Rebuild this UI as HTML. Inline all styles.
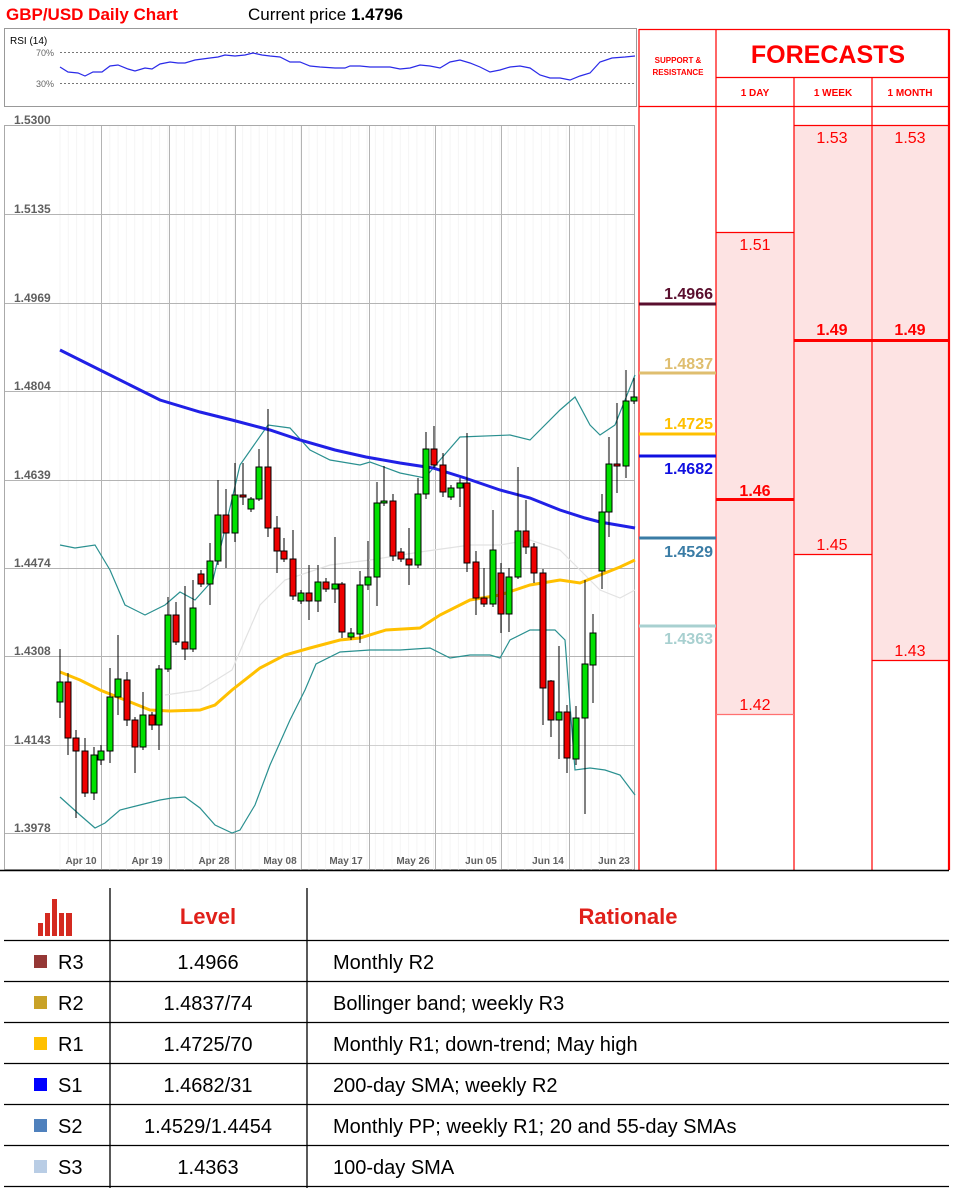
<!DOCTYPE html>
<html><head><meta charset="utf-8"><style>
html,body{margin:0;padding:0;background:#fff;width:959px;height:1188px;overflow:hidden}
svg{display:block}
text{font-family:"Liberation Sans",sans-serif}
</style></head><body>
<svg id="s" width="959" height="1188" viewBox="0 0 959 1188" xmlns="http://www.w3.org/2000/svg">
<rect width="959" height="1188" fill="#fff"/>
<text x="6" y="20" font-size="17" font-weight="bold" fill="#ff0000">GBP/USD Daily Chart</text>
<text x="248" y="20" font-size="17" fill="#000">Current price <tspan font-weight="bold">1.4796</tspan></text>
<rect x="4.5" y="28.5" width="632" height="78" fill="#fff" stroke="#999"/>
<text x="10" y="44" font-size="10" fill="#000">RSI (14)</text>
<text x="36" y="56" font-size="9" fill="#666">70%</text>
<text x="36" y="87" font-size="9" fill="#666">30%</text>
<line x1="60" y1="52.5" x2="636" y2="52.5" stroke="#777" stroke-dasharray="2,2"/>
<line x1="60" y1="83.5" x2="636" y2="83.5" stroke="#777" stroke-dasharray="2,2"/>
<polyline fill="none" stroke="#2a2ae8" stroke-width="1.2" points="60,67 68,72 78,73 85,76 93,72 102,72 110,66 118,65 128,69 135,71 145,68 152,69 160,64 170,62 178,63 185,63 195,60 210,58 218,57 225,55 235,56 245,55 253,53 262,55 270,56 280,57 290,62 300,62 310,66 320,67 335,68 345,68 350,66 360,66 370,67 380,67 390,67 400,69 410,68 420,65 430,66 440,68 450,62 460,60 470,63 480,67 490,72 500,70 510,67 520,66 530,68 540,75 550,78 560,78 570,80 580,76 590,73 600,62 612,58 625,57 635,56"/>
<rect x="4.5" y="125.5" width="630" height="744" fill="#fff" stroke="#aaa"/>
<g id="minor" stroke="#f5f5f5" stroke-width="1"></g>
<g stroke="#b4b4b4" stroke-width="1">
<line x1="5" y1="214.5" x2="634" y2="214.5"/><line x1="5" y1="303.5" x2="634" y2="303.5"/><line x1="5" y1="391.5" x2="634" y2="391.5"/><line x1="5" y1="480.5" x2="634" y2="480.5"/><line x1="5" y1="568.5" x2="634" y2="568.5"/><line x1="5" y1="656.5" x2="634" y2="656.5"/><line x1="5" y1="745.5" x2="634" y2="745.5" stroke="#d0d0d0"/><line x1="5" y1="833.5" x2="634" y2="833.5"/>
<line x1="101.5" y1="126" x2="101.5" y2="870"/><line x1="169.5" y1="126" x2="169.5" y2="870"/><line x1="235.5" y1="126" x2="235.5" y2="870"/><line x1="301.5" y1="126" x2="301.5" y2="870"/><line x1="369.5" y1="126" x2="369.5" y2="870"/><line x1="435.5" y1="126" x2="435.5" y2="870"/><line x1="501.5" y1="126" x2="501.5" y2="870"/><line x1="569.5" y1="126" x2="569.5" y2="870"/>
</g>
<g font-size="12" fill="#606060" font-weight="bold">
<text x="14" y="124">1.5300</text><text x="14" y="213">1.5135</text><text x="14" y="302">1.4969</text><text x="14" y="390">1.4804</text><text x="14" y="479">1.4639</text><text x="14" y="567">1.4474</text><text x="14" y="655">1.4308</text><text x="14" y="744">1.4143</text><text x="14" y="832">1.3978</text>
</g>
<g font-size="10" fill="#606060" font-weight="bold" text-anchor="middle">
<text x="81" y="864">Apr 10</text><text x="147" y="864">Apr 19</text><text x="214" y="864">Apr 28</text><text x="280" y="864">May 08</text><text x="346" y="864">May 17</text><text x="413" y="864">May 26</text><text x="481" y="864">Jun 05</text><text x="548" y="864">Jun 14</text><text x="614" y="864">Jun 23</text>
</g>
<polyline fill="none" stroke="#e2e2e2" stroke-width="1.2" points="165,695 200,690 232,670 260,605 285,580 330,565 370,560 420,552 470,545 500,545 530,540 560,550 580,570 600,590 620,598 635,590"/>
<polyline fill="none" stroke="#2a9090" stroke-width="1.2" points="60,545 75,548 95,545 110,570 125,605 145,615 165,605 180,592 195,600 213,580 240,465 268,425 290,428 310,450 330,460 360,465 370,462 400,473 425,478 440,460 460,437 510,435 530,440 560,410 575,397 590,425 600,435 615,425 635,375"/>
<polyline fill="none" stroke="#2a9090" stroke-width="1.2" points="60,797 80,815 95,828 105,823 120,810 140,805 160,800 172,798 185,797 200,808 215,825 232,833 240,830 255,805 270,765 290,720 305,690 316,664 340,652 370,650 400,650 430,648 450,658 470,655 490,655 500,658 510,640 530,630 555,630 565,640 575,770 590,768 605,770 620,775 635,795"/>
<polyline fill="none" stroke="#ffc000" stroke-width="3" points="60,672 80,680 100,690 125,700 150,710 170,711 200,710 215,705 232,690 260,668 285,655 310,648 340,640 360,638 386,630 420,628 440,615 470,600 500,595 530,585 560,580 580,583 600,575 620,567 635,560"/>
<polyline fill="none" stroke="#2020e6" stroke-width="3" points="60,350 80,360 100,370 130,385 160,400 200,412 232,420 270,430 300,440 335,450 366,457 400,463 433,468 465,478 500,490 530,498 560,510 585,518 600,522 635,528"/>
<g id="candles"></g>
<g>
<rect x="716" y="232" width="78" height="482" fill="#fde3e3"/>
<rect x="794" y="125" width="78" height="429" fill="#fde3e3"/>
<rect x="872" y="125" width="77" height="535" fill="#fde3e3"/>
<g stroke="#ff0000" stroke-width="1.2" fill="none">
<line x1="639" y1="29" x2="639" y2="870"/><line x1="716" y1="29" x2="716" y2="870"/><line x1="794" y1="77" x2="794" y2="870"/><line x1="872" y1="77" x2="872" y2="870"/>
<line x1="639" y1="29.5" x2="949" y2="29.5"/><line x1="716" y1="77.5" x2="949" y2="77.5"/><line x1="639" y1="106.5" x2="949" y2="106.5"/>
<line x1="794" y1="125.5" x2="949" y2="125.5"/><line x1="716" y1="232.5" x2="794" y2="232.5"/><line x1="794" y1="554.5" x2="872" y2="554.5"/><line x1="872" y1="660.5" x2="949" y2="660.5"/><line x1="716" y1="714.5" x2="794" y2="714.5" stroke="#ff7070"/>
</g>
<line x1="949" y1="29" x2="949" y2="870" stroke="#ff0000" stroke-width="2.2"/>
<line x1="716" y1="499.5" x2="794" y2="499.5" stroke="#ff0000" stroke-width="3"/>
<line x1="794" y1="340.5" x2="949" y2="340.5" stroke="#ff0000" stroke-width="3"/>
<text x="678" y="63" font-size="8" font-weight="bold" fill="#ff0000" text-anchor="middle">SUPPORT &amp;</text>
<text x="678" y="75" font-size="8" font-weight="bold" fill="#ff0000" text-anchor="middle">RESISTANCE</text>
<text x="828" y="63" font-size="25" font-weight="bold" fill="#ff0000" text-anchor="middle">FORECASTS</text>
<g font-size="10" font-weight="bold" fill="#ff0000" text-anchor="middle"><text x="755" y="96">1 DAY</text><text x="833" y="96">1 WEEK</text><text x="910" y="96">1 MONTH</text></g>
<g font-size="16" fill="#ff0000" text-anchor="middle">
<text x="832" y="143">1.53</text><text x="910" y="143">1.53</text><text x="755" y="250">1.51</text><text x="832" y="550">1.45</text><text x="910" y="656">1.43</text><text x="755" y="710">1.42</text>
<g font-weight="bold"><text x="832" y="335">1.49</text><text x="910" y="335">1.49</text><text x="755" y="496">1.46</text></g>
</g>
<g stroke-width="3">
<line x1="639" y1="304" x2="716" y2="304" stroke="#5a0f2e"/><line x1="639" y1="373" x2="716" y2="373" stroke="#dfbe6f"/><line x1="639" y1="434" x2="716" y2="434" stroke="#ffc000"/><line x1="639" y1="456" x2="716" y2="456" stroke="#1010e0"/><line x1="639" y1="538" x2="716" y2="538" stroke="#3a7ca5"/><line x1="639" y1="626" x2="716" y2="626" stroke="#a8d0d0"/>
</g>
<g font-size="16" font-weight="bold" text-anchor="end">
<text x="713" y="299" fill="#5a0f2e">1.4966</text><text x="713" y="369" fill="#dfbe6f">1.4837</text><text x="713" y="429" fill="#ffc000">1.4725</text><text x="713" y="474" fill="#1010e0">1.4682</text><text x="713" y="557" fill="#3a7ca5">1.4529</text><text x="713" y="644" fill="#a8d0d0">1.4363</text>
</g>
</g>
<line x1="0" y1="870.5" x2="949" y2="870.5" stroke="#000" stroke-width="1.5"/>
<g stroke="#000" stroke-width="1.3">
<line x1="110" y1="888" x2="110" y2="1188"/><line x1="307" y1="888" x2="307" y2="1188"/>
<line x1="4" y1="940.5" x2="949" y2="940.5"/><line x1="4" y1="981.5" x2="949" y2="981.5"/><line x1="4" y1="1022.5" x2="949" y2="1022.5"/><line x1="4" y1="1063.5" x2="949" y2="1063.5"/><line x1="4" y1="1104.5" x2="949" y2="1104.5"/><line x1="4" y1="1145.5" x2="949" y2="1145.5"/><line x1="4" y1="1186.5" x2="949" y2="1186.5"/>
</g>
<g fill="#d42a20"><rect x="38" y="923" width="5" height="13"/><rect x="45" y="913" width="5" height="23"/><rect x="52" y="899" width="5" height="37"/><rect x="59" y="913" width="5" height="23"/><rect x="66" y="913" width="6" height="23"/></g>
<g font-size="22" font-weight="bold" fill="#e0201a" text-anchor="middle"><text x="208" y="924">Level</text><text x="628" y="924">Rationale</text></g>
<g><rect x="34" y="955" width="13" height="13" fill="#953735"/><rect x="34" y="996" width="13" height="13" fill="#c9a227"/><rect x="34" y="1037" width="13" height="13" fill="#ffc000"/><rect x="34" y="1078" width="13" height="13" fill="#0000ff"/><rect x="34" y="1119" width="13" height="13" fill="#4f81bd"/><rect x="34" y="1160" width="13" height="13" fill="#b9cde5"/></g>
<g font-size="20" fill="#000">
<text x="58" y="969">R3</text><text x="58" y="1010">R2</text><text x="58" y="1051">R1</text><text x="58" y="1092">S1</text><text x="58" y="1133">S2</text><text x="58" y="1174">S3</text>
<g text-anchor="middle"><text x="208" y="969">1.4966</text><text x="208" y="1010">1.4837/74</text><text x="208" y="1051">1.4725/70</text><text x="208" y="1092">1.4682/31</text><text x="208" y="1133">1.4529/1.4454</text><text x="208" y="1174">1.4363</text></g>
<text x="333" y="969">Monthly R2</text><text x="333" y="1010">Bollinger band; weekly R3</text><text x="333" y="1051">Monthly R1; down-trend; May high</text><text x="333" y="1092">200-day SMA; weekly R2</text><text x="333" y="1133">Monthly PP; weekly R1; 20 and 55-day SMAs</text><text x="333" y="1174">100-day SMA</text>
</g>
</svg>
<script>
var C=[[60,682,702,'g',649,718],[68,682,738,'r',673,755],[76,738,751,'r',730,818],[85,751,793,'r',738,797],[94,755,793,'g',747,800],[101,751,760,'g',745,765],[110,697,751,'g',668,763],[118,679,697,'g',635,715],[127,680,720,'r',672,726],[135,720,747,'r',717,773],[143,715,747,'g',692,750],[152,715,725,'r',712,730],[159,669,725,'g',665,750],[168,615,669,'g',597,672],[176,615,642,'r',602,645],[185,642,649,'r',586,660],[193,608,649,'g',580,652],[201,574,584,'r',570,587],[210,561,584,'g',543,605],[218,515,561,'g',480,565],[226,515,533,'r',489,568],[235,495,533,'g',463,542],[243,495,497,'r',463,505],[251,499,509,'g',497,512],[259,467,499,'g',449,501],[268,467,528,'r',409,537],[277,528,551,'r',516,573],[284,551,559,'r',538,562],[293,559,596,'r',530,600],[301,593,601,'g',590,604],[309,593,601,'r',565,620],[318,582,601,'g',565,612],[326,582,589,'r',578,592],[335,584,589,'g',537,603],[342,584,632,'r',582,638],[351,633,637,'g',628,640],[360,585,634,'g',571,643],[368,577,585,'g',541,590],[377,503,577,'g',482,606],[384,501,503,'g',466,506],[393,501,556,'r',494,561],[401,552,559,'r',548,562],[409,559,565,'r',528,585],[418,494,565,'g',478,568],[426,449,494,'g',432,499],[434,449,465,'r',426,468],[443,465,492,'r',453,497],[451,488,497,'g',485,500],[460,483,488,'g',478,507],[467,483,563,'r',433,572],[476,562,598,'r',551,615],[484,598,604,'r',568,607],[493,550,604,'g',510,607],[501,573,614,'r',563,633],[509,577,614,'g',568,632],[518,531,577,'g',467,579],[526,531,547,'r',500,554],[534,547,573,'r',543,583],[543,573,688,'r',569,725],[551,681,720,'r',680,737],[559,712,720,'g',646,759],[567,712,758,'r',705,773],[576,718,759,'g',706,765],[585,664,718,'g',580,814],[593,633,665,'g',614,703],[602,512,571,'g',494,589],[609,464,512,'g',437,537],[617,464,466,'r',403,493],[626,401,466,'g',370,478],[634,397,401,'g',378,404]];
var h='';
C.forEach(function(c){h+='<line x1="'+c[0]+'" y1="'+c[4]+'" x2="'+c[0]+'" y2="'+c[5]+'" stroke="#000" stroke-width="1"/>';
var t=c[1],b=Math.max(c[2],c[1]+2);h+='<rect x="'+(c[0]-3)+'" y="'+t+'" width="6" height="'+(b-t)+'" fill="'+(c[3]=='g'?'#00e000':'#ee0000')+'" stroke="#000" stroke-width="1"/>';});
document.getElementById('candles').innerHTML=h;
var m='';for(var x=60;x<634;x+=8.3){m+='<line x1="'+x.toFixed(1)+'" y1="126" x2="'+x.toFixed(1)+'" y2="870"/>';}
document.getElementById('minor').innerHTML=m;
</script>
</body></html>
